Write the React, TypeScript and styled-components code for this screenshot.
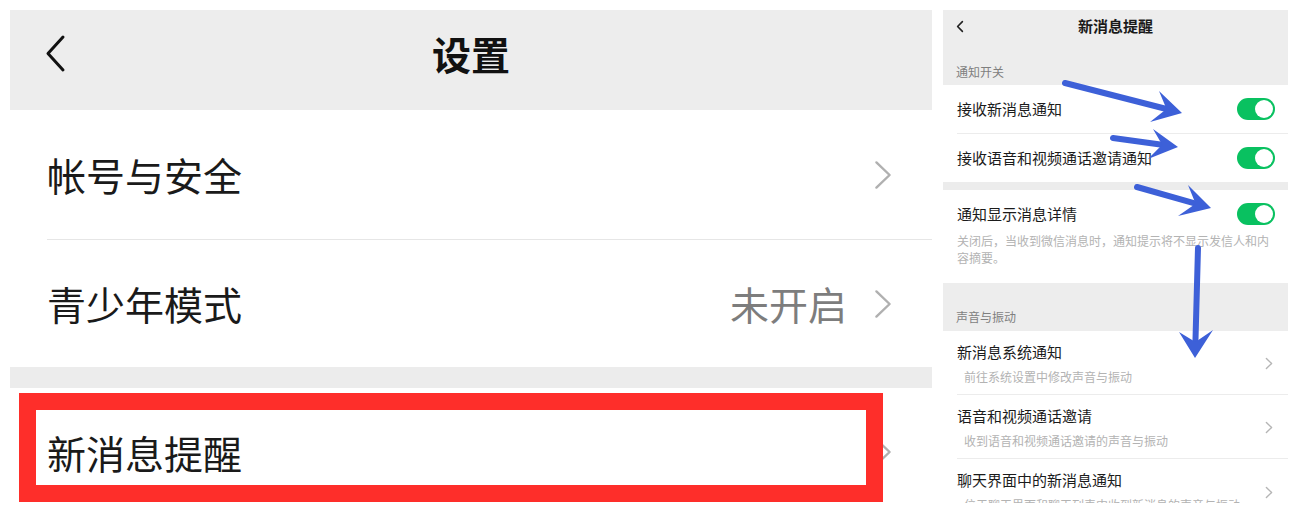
import * as React from "react";
import styled, { createGlobalStyle } from "styled-components";

const GlobalStyle = createGlobalStyle`
  html, body {
    margin: 0;
    padding: 0;
    background: #ffffff;
  }
  body {
    font-family: "Noto Sans CJK SC", "Noto Sans", sans-serif;
  }
`;

const Page = styled.div`
  position: relative;
  width: 1299px;
  height: 514px;
  box-sizing: border-box;
  padding: 10px 0 0 10px;
  display: flex;
  align-items: flex-start;
  overflow: hidden;
`;

/* ---------- left: 设置 ---------- */

const LeftPanel = styled.div`
  width: 922px;
  height: 494px;
  flex-shrink: 0;
  display: flex;
  flex-direction: column;
  overflow: hidden;
`;

const LeftHeader = styled.div`
  height: 100px;
  flex-shrink: 0;
  box-sizing: border-box;
  padding-bottom: 14px;
  background: #ededed;
  display: grid;
  grid-template-columns: 1fr auto 1fr;
  align-items: center;
`;

const BigBack = styled.div`
  padding-left: 35px;
  display: flex;
  align-items: center;
`;

const BigTitle = styled.div`
  font-size: 39px;
  line-height: 1;
  font-weight: 700;
  color: #111111;
`;

const SettingRow = styled.div<{ $h: number; $divider?: boolean }>`
  position: relative;
  height: ${(p) => p.$h}px;
  flex-shrink: 0;
  box-sizing: border-box;
  margin-left: 37px;
  padding: 0 40px 0 0;
  display: flex;
  align-items: center;
  border-bottom: ${(p) => (p.$divider ? "1px solid #e6e6e6" : "none")};
`;

const SettingLabel = styled.div`
  flex: 1;
  font-size: 39px;
  line-height: 1;
  color: #1a1a1a;
`;

const SettingValue = styled.div`
  font-size: 39px;
  line-height: 1;
  color: #7d7d7d;
  margin-right: 27px;
`;

const GrayGap = styled.div<{ $h: number }>`
  height: ${(p) => p.$h}px;
  flex-shrink: 0;
  background: #ececec;
`;

const Highlight = styled.div`
  position: absolute;
  left: -28px;
  top: 5px;
  width: 864px;
  height: 109px;
  box-sizing: border-box;
  border: 17px solid #fe2e2a;
  z-index: 2;
`;

/* ---------- right: 新消息提醒 ---------- */

const RightPanel = styled.div`
  width: 345px;
  height: 493px;
  margin-left: 11px;
  flex-shrink: 0;
  display: flex;
  flex-direction: column;
  overflow: hidden;
  background: #ffffff;
`;

const SmallHeader = styled.div`
  height: 32px;
  flex-shrink: 0;
  background: #ededed;
  display: grid;
  grid-template-columns: 1fr auto 1fr;
  align-items: center;
`;

const SmallBack = styled.div`
  padding-left: 13px;
  display: flex;
  align-items: center;
`;

const SmallTitle = styled.div`
  font-size: 15px;
  line-height: 20px;
  font-weight: 700;
  color: #1a1a1a;
`;

const SectionLabel = styled.div<{ $h: number; $pb: number }>`
  height: ${(p) => p.$h}px;
  flex-shrink: 0;
  box-sizing: border-box;
  padding: 0 0 ${(p) => p.$pb}px 13px;
  background: #ededed;
  display: flex;
  align-items: flex-end;
  font-size: 12px;
  line-height: 12px;
  color: #7f7f7f;
`;

const SwitchRow = styled.div<{ $divider?: boolean }>`
  height: ${(p) => (p.$divider ? 49 : 48)}px;
  flex-shrink: 0;
  box-sizing: border-box;
  margin-left: 14px;
  padding-right: 13px;
  display: flex;
  align-items: center;
  justify-content: space-between;
  border-bottom: ${(p) => (p.$divider ? "1px solid #ececec" : "none")};
`;

const RowTitle = styled.div`
  font-size: 15px;
  line-height: 20px;
  color: #1b1b1b;
  white-space: nowrap;
`;

const Switch = styled.div`
  position: relative;
  width: 38px;
  height: 22px;
  border-radius: 11px;
  background: #09c160;
  flex-shrink: 0;

  &::after {
    content: "";
    position: absolute;
    top: 2px;
    right: 2px;
    width: 18px;
    height: 18px;
    border-radius: 50%;
    background: #ffffff;
  }
`;

const DetailRow = styled.div`
  flex-shrink: 0;
  margin-left: 14px;
  padding: 14px 13px 17px 0;
`;

const DetailTop = styled.div`
  height: 20px;
  display: flex;
  align-items: center;
  justify-content: space-between;
`;

const DetailText = styled.div`
  margin-top: 8px;
  max-width: 320px;
  font-size: 12px;
  line-height: 17px;
  color: #b3b3b3;
`;

const LinkRow = styled.div<{ $divider?: boolean }>`
  height: 64px;
  flex-shrink: 0;
  box-sizing: border-box;
  margin-left: 14px;
  padding: 11px 15px 9px 0;
  display: flex;
  align-items: center;
  border-bottom: ${(p) => (p.$divider ? "1px solid #ececec" : "none")};
`;

const LinkTexts = styled.div`
  flex: 1;
  align-self: flex-start;
`;

const LinkSub = styled.div`
  margin-top: 7px;
  padding-left: 7px;
  font-size: 12px;
  line-height: 16px;
  color: #b3b3b3;
  white-space: nowrap;
`;

/* ---------- annotation arrows ---------- */

const Overlay = styled.svg`
  position: absolute;
  left: 0;
  top: 0;
  pointer-events: none;
  z-index: 5;
`;

type Pt = [number, number];
type ArrowSpec = { start: Pt; tip: Pt; w1: Pt; w2: Pt };

const arrows: ArrowSpec[] = [
  { start: [1065, 83], tip: [1182, 113], w1: [1159, 91], w2: [1150, 122] },
  { start: [1113, 138], tip: [1178, 147], w1: [1153, 129], w2: [1148, 159] },
  { start: [1137, 187], tip: [1211, 208], w1: [1188, 185], w2: [1178, 216] },
  { start: [1198, 248], tip: [1195, 358], w1: [1213, 330], w2: [1179, 332] },
];

const ARROW_BLUE = "#3d60d8";

const Arrow = ({ start, tip, w1, w2 }: ArrowSpec) => {
  const dx = tip[0] - start[0];
  const dy = tip[1] - start[1];
  const len = Math.hypot(dx, dy);
  const notch: Pt = [tip[0] - (dx / len) * 16, tip[1] - (dy / len) * 16];
  return (
    <g>
      <line
        x1={start[0]}
        y1={start[1]}
        x2={notch[0]}
        y2={notch[1]}
        stroke={ARROW_BLUE}
        strokeWidth={6}
        strokeLinecap="round"
      />
      <polygon
        points={[tip, w1, notch, w2].map((p) => p.join(",")).join(" ")}
        fill={ARROW_BLUE}
      />
    </g>
  );
};

/* ---------- icons ---------- */

const BackIcon = ({ w, h, sw, color }: { w: number; h: number; sw: number; color: string }) => (
  <svg width={w} height={h} viewBox={`0 0 ${w} ${h}`}>
    <polyline
      points={`${w - sw},${sw} ${sw},${h / 2} ${w - sw},${h - sw}`}
      fill="none"
      stroke={color}
      strokeWidth={sw}
      strokeLinecap="round"
      strokeLinejoin="round"
    />
  </svg>
);

const ChevronIcon = ({ w, h, sw, color }: { w: number; h: number; sw: number; color: string }) => (
  <svg width={w} height={h} viewBox={`0 0 ${w} ${h}`} style={{ flexShrink: 0 }}>
    <polyline
      points={`${sw},${sw} ${w - sw},${h / 2} ${sw},${h - sw}`}
      fill="none"
      stroke={color}
      strokeWidth={sw}
      strokeLinecap="round"
      strokeLinejoin="round"
    />
  </svg>
);

const BigChevron = () => <ChevronIcon w={18} h={30} sw={2.4} color="#b0b0b0" />;
const SmallChevron = () => <ChevronIcon w={8} h={13} sw={1.4} color="#b5b5b5" />;

const App = () => (
  <Page>
    <GlobalStyle />

    <LeftPanel>
      <LeftHeader>
        <BigBack>
          <BackIcon w={21} h={39} sw={3} color="#111111" />
        </BigBack>
        <BigTitle>设置</BigTitle>
        <div />
      </LeftHeader>

      <SettingRow $h={130} $divider>
        <SettingLabel>帐号与安全</SettingLabel>
        <BigChevron />
      </SettingRow>

      <SettingRow $h={127}>
        <SettingLabel>青少年模式</SettingLabel>
        <SettingValue>未开启</SettingValue>
        <BigChevron />
      </SettingRow>

      <GrayGap $h={21} />

      <SettingRow $h={128}>
        <SettingLabel>新消息提醒</SettingLabel>
        <BigChevron />
        <Highlight />
      </SettingRow>
    </LeftPanel>

    <RightPanel>
      <SmallHeader>
        <SmallBack>
          <BackIcon w={8} h={13} sw={1.6} color="#222222" />
        </SmallBack>
        <SmallTitle>新消息提醒</SmallTitle>
        <div />
      </SmallHeader>

      <SectionLabel $h={43} $pb={7}>通知开关</SectionLabel>

      <SwitchRow $divider>
        <RowTitle>接收新消息通知</RowTitle>
        <Switch />
      </SwitchRow>
      <SwitchRow>
        <RowTitle>接收语音和视频通话邀请通知</RowTitle>
        <Switch />
      </SwitchRow>

      <GrayGap $h={8} />

      <DetailRow>
        <DetailTop>
          <RowTitle>通知显示消息详情</RowTitle>
          <Switch />
        </DetailTop>
        <DetailText>关闭后，当收到微信消息时，通知提示将不显示发信人和内容摘要。</DetailText>
      </DetailRow>

      <SectionLabel $h={48} $pb={8}>声音与振动</SectionLabel>

      <LinkRow $divider>
        <LinkTexts>
          <RowTitle>新消息系统通知</RowTitle>
          <LinkSub>前往系统设置中修改声音与振动</LinkSub>
        </LinkTexts>
        <SmallChevron />
      </LinkRow>
      <LinkRow $divider>
        <LinkTexts>
          <RowTitle>语音和视频通话邀请</RowTitle>
          <LinkSub>收到语音和视频通话邀请的声音与振动</LinkSub>
        </LinkTexts>
        <SmallChevron />
      </LinkRow>
      <LinkRow>
        <LinkTexts>
          <RowTitle>聊天界面中的新消息通知</RowTitle>
          <LinkSub>位于聊天界面和聊天列表中收到新消息的声音与振动</LinkSub>
        </LinkTexts>
        <SmallChevron />
      </LinkRow>
    </RightPanel>

    <Overlay width={1299} height={514} viewBox="0 0 1299 514">
      {arrows.map((a, i) => (
        <Arrow key={i} {...a} />
      ))}
    </Overlay>
  </Page>
);

export default App;
